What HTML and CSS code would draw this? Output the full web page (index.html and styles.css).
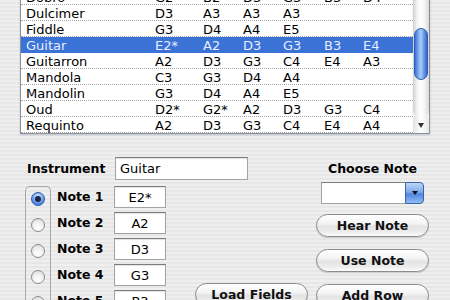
FILE: index.html
```html
<!DOCTYPE html>
<html lang="en">
<head>
    <meta charset="UTF-8">
    <meta name="viewport" content="width=device-width, initial-scale=1.0">
    <title>Instrument Tunings</title>
    <link rel="stylesheet" href="styles.css">
</head>
<body>
    <div class="tuning-list">
        <div class="rows">
            <div class="row"><span>Dobro</span><span>G2</span><span>B2</span><span>D3</span><span>G3</span><span>B3</span><span>D4</span></div>
            <div class="row"><span>Dulcimer</span><span>D3</span><span>A3</span><span>A3</span><span>A3</span><span></span><span></span></div>
            <div class="row"><span>Fiddle</span><span>G3</span><span>D4</span><span>A4</span><span>E5</span><span></span><span></span></div>
            <div class="row selected"><span>Guitar</span><span>E2*</span><span>A2</span><span>D3</span><span>G3</span><span>B3</span><span>E4</span></div>
            <div class="row"><span>Guitarron</span><span>A2</span><span>D3</span><span>G3</span><span>C4</span><span>E4</span><span>A3</span></div>
            <div class="row"><span>Mandola</span><span>C3</span><span>G3</span><span>D4</span><span>A4</span><span></span><span></span></div>
            <div class="row"><span>Mandolin</span><span>G3</span><span>D4</span><span>A4</span><span>E5</span><span></span><span></span></div>
            <div class="row"><span>Oud</span><span>D2*</span><span>G2*</span><span>A2</span><span>D3</span><span>G3</span><span>C4</span></div>
            <div class="row"><span>Requinto</span><span>A2</span><span>D3</span><span>G3</span><span>C4</span><span>E4</span><span>A4</span></div>
        </div>
        <div class="scrollbar">
            <div class="track"><div class="thumb"></div></div>
            <div class="arrows"><span class="arrow-down"></span></div>
        </div>
    </div>

    <div class="editor">
        <div class="left">
            <div class="instrument-row">
                <label for="instrument">Instrument</label>
                <input type="text" id="instrument" class="field" value="Guitar">
            </div>
            <div class="notes">
                <div class="radio-box">
                    <div class="radio-item"><span class="radio checked"></span></div>
                    <div class="radio-item"><span class="radio"></span></div>
                    <div class="radio-item"><span class="radio"></span></div>
                    <div class="radio-item"><span class="radio"></span></div>
                    <div class="radio-item"><span class="radio"></span></div>
                    <div class="radio-item"><span class="radio"></span></div>
                </div>
                <div class="note-rows">
                    <div class="note-row"><label>Note 1</label><input type="text" class="field note-field" value="E2*"></div>
                    <div class="note-row"><label>Note 2</label><input type="text" class="field note-field" value="A2"></div>
                    <div class="note-row"><label>Note 3</label><input type="text" class="field note-field" value="D3"></div>
                    <div class="note-row"><label>Note 4</label><input type="text" class="field note-field" value="G3"></div>
                    <div class="note-row"><label>Note 5</label><input type="text" class="field note-field" value="B3"></div>
                    <div class="note-row"><label>Note 6</label><input type="text" class="field note-field" value="E4"></div>
                </div>
                <div class="load-col">
                    <button class="aqua-btn load-btn">Load Fields</button>
                </div>
            </div>
        </div>

        <div class="right">
            <div class="choose-label">Choose Note</div>
            <div class="combo">
                <div class="combo-field"></div>
                <div class="combo-btn"><span class="combo-arrow"></span></div>
            </div>
            <button class="aqua-btn hear-btn">Hear Note</button>
            <button class="aqua-btn">Use Note</button>
            <button class="aqua-btn">Add Row</button>
        </div>
    </div>
</body>
</html>
```

FILE: styles.css
```css
html, body {
    height: 300px;
    overflow: hidden;
}

body {
    margin: 0;
    font-family: "DejaVu Sans", sans-serif;
    font-size: 13px;
    color: #000;
    background: repeating-linear-gradient(to bottom, #efefef 0, #efefef 2px, #e7e7e7 2px, #e7e7e7 4px);
}

/* tuning table */
.tuning-list {
    display: flex;
    width: 410px;
    margin: -12px 0 0 20px;
    box-sizing: border-box;
    border: 1px solid #8d939c;
    background: #fff;
    box-shadow: 0 1px 2px rgba(60, 80, 120, 0.25);
}

.rows {
    flex: 1;
}

.row {
    display: grid;
    grid-template-columns: 129px 48px 40px 40px 41px 39px 55px;
    height: 16px;
    box-sizing: border-box;
    padding-top: 1px;
    line-height: 15px;
    border-bottom: 1px dotted #a6a6a6;
}

.row span {
    padding-left: 5px;
}

.row.selected {
    background: #3b72d6;
    color: #e6eeff;
    border-bottom-color: #3b72d6;
}

.scrollbar {
    width: 16px;
    display: flex;
    flex-direction: column;
}

.track {
    flex: 1;
    padding-top: 39px;
    border-radius: 0 0 7px 7px;
    background: linear-gradient(to right, #cfcfcf, #f3f3f3 25%, #fff 50%, #f3f3f3 75%, #d9d9d9);
    box-shadow: 0 2px 2px rgba(0, 0, 0, 0.12);
}

.thumb {
    height: 52px;
    margin: 0 1px;
    box-sizing: border-box;
    border: 1px solid #2d5db6;
    border-radius: 7px;
    background: linear-gradient(to right, #3a72d5, #8db6f1 35%, #aacbf7 50%, #6c9ee8 72%, #3068cc);
}

.arrows {
    height: 16px;
    display: flex;
    align-items: center;
    justify-content: center;
    background: linear-gradient(to right, #e2e2e2, #fff 50%, #e8e8e8);
}

.arrow-down {
    width: 0;
    height: 0;
    border-left: 3px solid transparent;
    border-right: 3px solid transparent;
    border-top: 5px solid #333;
}

/* editor area */
.editor {
    display: flex;
}

.left {
    width: 316px;
    box-sizing: border-box;
    padding-left: 25px;
}

.instrument-row {
    display: flex;
    align-items: center;
    height: 23px;
    margin-top: 23px;
}

.instrument-row label {
    width: 88px;
    margin-left: 2px;
    font-weight: bold;
    font-size: 12.5px;
}

.field {
    width: 133px;
    height: 23px;
    box-sizing: border-box;
    margin: 0;
    padding: 0 4px;
    border: 1px solid #a3a3a3;
    border-top-color: #7c7c7c;
    border-radius: 0;
    background: #fff;
    box-shadow: inset 0 1px 1px rgba(0, 0, 0, 0.12);
    font-family: "DejaVu Sans", sans-serif;
    font-size: 13px;
    color: #000;
    outline: none;
}

.notes {
    display: flex;
    margin-top: 6px;
}

.radio-box {
    width: 26px;
    box-sizing: border-box;
    padding-top: 1px;
    border: 1px solid #a8a8a8;
    border-bottom: none;
    border-radius: 5px 5px 0 0;
    display: flex;
    flex-direction: column;
    align-items: center;
}

.radio-item {
    height: 26px;
    padding-top: 4px;
    box-sizing: border-box;
}

.radio {
    display: block;
    width: 14px;
    height: 14px;
    box-sizing: border-box;
    border: 1px solid #8a8a8a;
    border-radius: 50%;
    background: radial-gradient(circle at 50% 75%, #ffffff, #f2f2f2 45%, #d6d6d6);
}

.radio.checked {
    position: relative;
    border-color: #2c58a8;
    background: radial-gradient(circle at 50% 30%, #dbe9ff 0, #86b2f2 40%, #3a72d6 85%, #2a5fc2);
}

.radio.checked::after {
    content: "";
    position: absolute;
    left: 3px;
    top: 3px;
    width: 6px;
    height: 6px;
    border-radius: 50%;
    background: #1b2448;
}

.note-rows {
    margin-left: 6px;
}

.note-row {
    display: flex;
    height: 26px;
}

.note-row label {
    width: 57px;
    line-height: 22px;
    font-weight: bold;
    font-size: 12.5px;
}

.note-field {
    width: 52px;
    height: 22px;
    text-align: center;
}

.load-col {
    margin-left: 29px;
    padding-top: 97px;
}

.load-btn {
    width: 102px;
}

.right {
    width: 113px;
    padding-top: 27px;
    display: flex;
    flex-direction: column;
    align-items: center;
}

.choose-label {
    line-height: 16px;
    font-weight: bold;
    font-size: 12.5px;
}

.combo {
    display: flex;
    width: 103px;
    height: 22px;
    margin-top: 5px;
}

.combo-field {
    flex: 1;
    border: 1px solid #a3a3a3;
    border-top-color: #7c7c7c;
    border-right: none;
    background: #fff;
}

.combo-btn {
    width: 17px;
    display: flex;
    align-items: center;
    justify-content: center;
    border: 1px solid #3a63a8;
    border-radius: 0 4px 4px 0;
    background: linear-gradient(to bottom, #bcd6f8, #7fabec 45%, #4f86df 55%, #8fbcf5);
}

.combo-arrow {
    width: 0;
    height: 0;
    border-left: 3px solid transparent;
    border-right: 3px solid transparent;
    border-top: 4px solid #111;
}

.aqua-btn {
    width: 113px;
    height: 23px;
    margin: 12px 0 0;
    padding: 0;
    box-sizing: border-box;
    border: 1px solid #8b8b8b;
    border-radius: 12px;
    background: linear-gradient(to bottom, #ffffff, #f4f4f4 40%, #e3e3e3 55%, #ececec 80%, #fbfbfb);
    box-shadow: 0 1px 1px rgba(0, 0, 0, 0.15);
    font-family: "DejaVu Sans", sans-serif;
    font-size: 12.5px;
    font-weight: bold;
    color: #111;
}

.hear-btn {
    margin-top: 10px;
}

.load-col .aqua-btn {
    margin-top: 0;
}
```
